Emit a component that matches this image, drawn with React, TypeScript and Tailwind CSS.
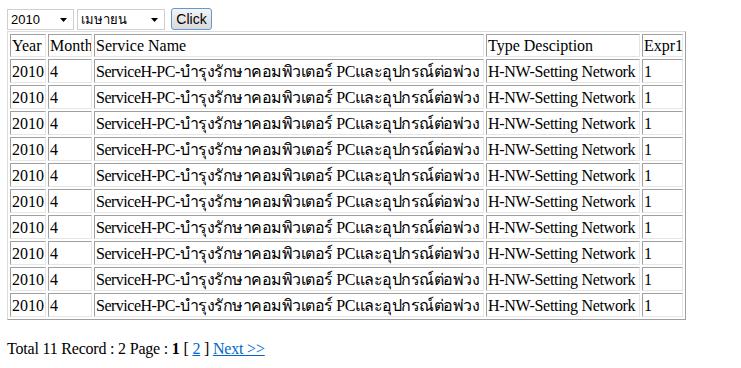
import React from 'react';

const rows = Array.from({ length: 10 }, () => ({
  year: '2010',
  month: '4',
  service: 'ServiceH-PC-บำรุงรักษาคอมพิวเตอร์ PCและอุปกรณ์ต่อพ่วง',
  type: 'H-NW-Setting Network',
  expr: '1',
}));

const cell =
  'border border-t-[#a0a0a0] border-l-[#a0a0a0] border-r-[#e6e6e6] border-b-[#e6e6e6] px-[1px] pt-[1px] pb-0 text-left font-normal leading-[18px] whitespace-nowrap overflow-hidden align-middle';

function FakeSelect({ label, width }: { label: string; width: string }) {
  return (
    <div
      className={`${width} h-[21px] flex items-center justify-between border border-[#cfcfcf] bg-white pl-[3px] pr-[6px] font-['Liberation_Sans',sans-serif] text-[13px] text-black`}
    >
      <span className="leading-none">{label}</span>
      <svg width="7" height="4" viewBox="0 0 7 4">
        <path d="M0 0h7L3.5 4z" fill="#000" />
      </svg>
    </div>
  );
}

export default function App() {
  return (
    <div className="pl-[7px] pt-[9px] bg-white text-black font-['Liberation_Serif','Noto_Sans',serif] text-[16px] leading-[18px]">
      {/* Filter bar */}
      <div className="flex items-center h-[21px]">
        <FakeSelect label="2010" width="w-[67px]" />
        <div className="ml-[3px]">
          <FakeSelect label="เมษายน" width="w-[88px]" />
        </div>
        <button className="ml-[6px] -mt-[1px] w-[41px] h-[22px] rounded-[3px] border border-[#5e9bd4] bg-gradient-to-b from-[#f4f4f4] to-[#d9d9d9] font-['Liberation_Sans',sans-serif] text-[14px] leading-none text-black">
          Click
        </button>
      </div>

      {/* Data table */}
      <table className="mt-[1px] table-fixed border-separate border-spacing-[2px] border border-t-[#dcdcdc] border-l-[#dcdcdc] border-r-[#a0a0a0] border-b-[#a0a0a0] w-[679px]">
        <thead>
          <tr className="h-[23px]">
            <th className={`${cell} w-[36px]`}>Year</th>
            <th className={`${cell} w-[44px]`}>Month</th>
            <th className={`${cell} w-[390px]`}>Service Name</th>
            <th className={`${cell} w-[154px]`}>Type Desciption</th>
            <th className={`${cell} w-[41px]`}>Expr1</th>
          </tr>
        </thead>
        <tbody>
          {rows.map((r, i) => (
            <tr key={i} className="h-[24px]">
              <td className={cell}>{r.year}</td>
              <td className={cell}>{r.month}</td>
              <td className={`${cell} tracking-[-0.5px]`}>{r.service}</td>
              <td className={`${cell} tracking-[-0.3px]`}>{r.type}</td>
              <td className={cell}>{r.expr}</td>
            </tr>
          ))}
        </tbody>
      </table>

      {/* Pager */}
      <p className="mt-[19px] leading-[20px] tracking-[-0.2px]">
        Total 11 Record : 2 Page : <b>1</b> [ <a href="#" className="text-[#0066cc] underline">2</a> ]{' '}
        <a href="#" className="text-[#0066cc] underline">Next &gt;&gt;</a>
      </p>
    </div>
  );
}
